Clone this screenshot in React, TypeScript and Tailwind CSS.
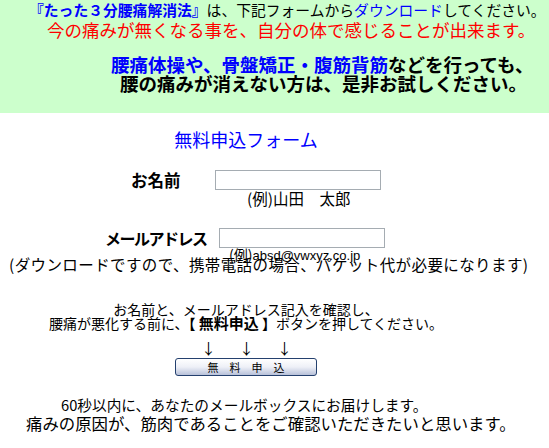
export default function App() {
  return (
    <div className="w-[549px] h-[448px] overflow-hidden bg-white text-black font-['Noto_Sans_CJK_JP',sans-serif]">
      {/* ヘッダー */}
      <div className="h-[113px] bg-[#ccffcc] whitespace-nowrap">
        <div className="h-[20px] leading-[20px] pl-[29px] text-[14.8px]">
          <span className="font-bold text-[#0000ff]">『たった３分腰痛解消法』</span>は、下記フォームから
          <span className="text-[#0000ff]">ダウンロード</span>してください。
        </div>
        <div className="h-[20px] leading-[20px] pl-[47px] text-[17.5px] text-[#ff0000]">
          今の痛みが無くなる事を、自分の体で感じることが出来ます。
        </div>
        <div className="mt-[15px] h-[19px] leading-[19px] pl-[111px] text-[18.5px] font-bold">
          <span className="text-[#0000ff]">腰痛体操や、骨盤矯正・腹筋背筋</span>などを行っても、
        </div>
        <div className="h-[18px] leading-[18px] pl-[120px] text-[18.5px] font-bold">
          腰の痛みが消えない方は、是非お試しください。
        </div>
      </div>

      {/* フォーム */}
      <div className="whitespace-nowrap">
        <div className="mt-[16px] w-[492px] h-[20px] leading-[20px] text-center text-[18px] text-[#0000ff]">
          無料申込フォーム
        </div>

        <div className="mt-[21px] h-[20px] flex items-center pl-[131px]">
          <span className="w-[84px] text-[16.5px] font-bold leading-[20px]">お名前</span>
          <input type="text" className="w-[166px] h-[20px] border border-[#a5acb2] bg-white outline-none" />
        </div>
        <div className="h-[17px] leading-[17px] pl-[247px] text-[15.5px]">(例)山田　太郎</div>

        <div className="mt-[21px] h-[20px] flex items-center pl-[105px]">
          <span className="w-[114px] text-[16px] font-bold tracking-[-1.5px] leading-[20px]">メールアドレス</span>
          <input type="text" className="w-[166px] h-[20px] border border-[#a5acb2] bg-white outline-none" />
        </div>
        <div className="h-[10px] leading-[10px] pl-[229px]">
          <span className="text-[14px]">(例)</span>
          <span className="text-[13px] font-['Liberation_Sans',sans-serif]">absd@vwxyz.co.jp</span>
        </div>
        <div className="h-[13px] leading-[13px] pl-[9px] text-[15.5px] tracking-[0.4px]">
          (ダウンロードですので、携帯電話の場合、パケット代が必要になります)
        </div>

        <div className="mt-[31px] w-[492px] text-center text-[14px] leading-[14px]">
          <div>お名前と、メールアドレス記入を確認し、</div>
          <div>
            腰痛が悪化する前に、<span className="font-bold">【 <span className="text-[15px]">無料申込</span> 】</span>ボタンを押してください。
          </div>
        </div>

        <div className="mt-[11px] w-[492px] h-[14px] leading-[14px] flex justify-center gap-[24px] text-[15px]">
          <span className="w-[14px] text-center">↓</span>
          <span className="w-[14px] text-center">↓</span>
          <span className="w-[14px] text-center">↓</span>
        </div>

        <div className="mt-[3px] w-[492px] flex justify-center">
          <button
            type="button"
            className="w-[142px] h-[18px] rounded-[3px] border border-[#24406e] bg-linear-to-b from-white via-[#eef0f7] to-[#b8c1d9] text-[11px] leading-[16px] text-black"
          >
            無　料　申　込
          </button>
        </div>

        <div className="mt-[22px] h-[14px] leading-[14px] pl-[61px] text-[14.7px]">
          60秒以内に、あなたのメールボックスにお届けします。
        </div>
        <div className="mt-[4px] h-[14px] leading-[14px] pl-[26px] text-[16.4px]">
          痛みの原因が、筋肉であることをご確認いただきたいと思います。
        </div>
      </div>
    </div>
  )
}
